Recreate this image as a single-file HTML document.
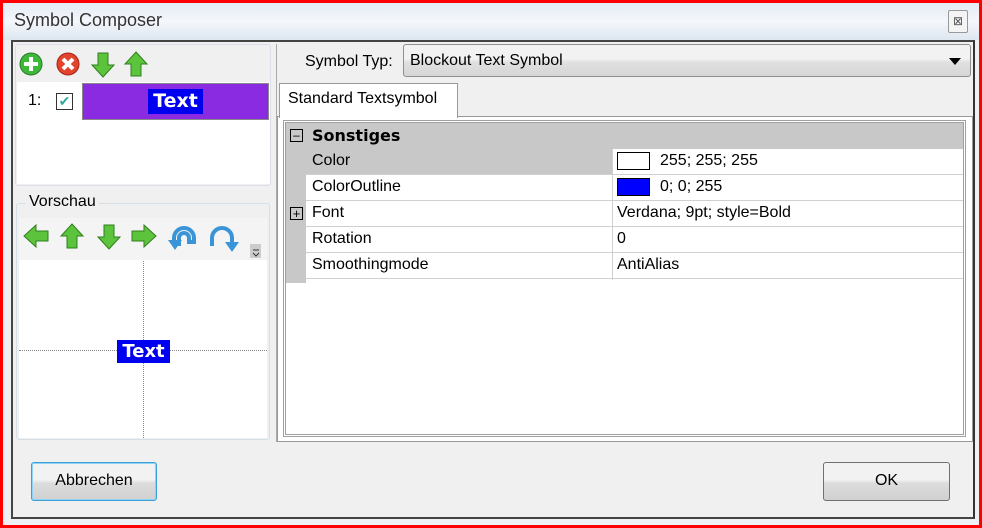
<!DOCTYPE html>
<html><head><meta charset="utf-8"><style>
*{box-sizing:border-box;margin:0;padding:0}
body{width:982px;height:528px;overflow:hidden;background:#fff;font-family:"Liberation Sans",sans-serif;font-size:16px;color:#000;position:relative}
.a{position:absolute}
.red{left:0;top:0;width:982px;height:528px;border:3px solid #f00;background:#eef0f3}
.title{left:3px;top:3px;width:976px;height:37px;background:linear-gradient(#e4ebf4,#f4f7fb 50%,#dde6f0)}
.frame{left:11px;top:40px;width:964px;height:479px;border:2px solid #444;border-right-color:#333;background:#f0f0f0}
.row{position:absolute;left:0;height:26px;width:100%;border-bottom:1px solid #d0d0d0;background:#fff}
.row span{position:absolute;top:3px}
.btn{border:1px solid #707070;border-radius:3px;background:linear-gradient(#f2f2f2 45%,#dcdcdc 55%,#d0d0d0);text-align:center;line-height:36px}
</style></head><body>
<div class="a red"></div>
<div class="a title"></div>
<div class="a" style="left:14px;top:10px;font-size:18px;color:#333">Symbol Composer</div>
<div class="a" style="left:948px;top:10px;width:20px;height:23px;border:1px solid #999;border-radius:2px;background:#f4f4f4;font-size:12px;text-align:center;line-height:21px;color:#555">&#x22A0;</div>
<div class="a frame"></div>

<!-- left list panel -->
<div class="a" style="left:15px;top:44px;width:256px;height:142px;border:1px solid #dde;background:#f0f0f0;border-radius:3px"></div>
<svg class="a" style="left:18px;top:50px" width="140" height="28">
<circle cx="13" cy="14" r="11" fill="#3db83a" stroke="#2a7c25"/><path d="M13 7v14M6 14h14" stroke="#fff" stroke-width="4"/>
<circle cx="50" cy="14" r="11" fill="#e2452c" stroke="#a42315"/><path d="M45 9l10 10M55 9l-10 10" stroke="#fff" stroke-width="4"/>
<path d="M80 3h10v12h6l-11 12l-11-12h6z" fill="#5cc43c" stroke="#2f7e1c"/>
<path d="M118 2l11 12h-6v12h-10v-12h-6z" fill="#5cc43c" stroke="#2f7e1c"/>
</svg>
<div class="a" style="left:17px;top:82px;width:253px;height:102px;background:#fff"></div>
<div class="a" style="left:28px;top:92px">1:</div>
<div class="a" style="left:56px;top:93px;width:17px;height:17px;border:1px solid #333;background:#fff;color:#3a9;font-size:14px;line-height:15px;text-align:center">&#10004;</div>
<div class="a" style="left:82px;top:83px;width:187px;height:37px;background:#8a2be2;border:1px solid #888"></div>
<div class="a" style="left:148px;top:89px;width:55px;height:25px;background:#0000f0;color:#fff;font-weight:bold;font-size:19px;line-height:25px;text-align:center;font-family:'DejaVu Sans',sans-serif">Text</div>

<!-- Vorschau -->
<div class="a" style="left:16px;top:203px;width:254px;height:237px;border:1px solid #d5dfe5;border-radius:3px"></div>
<div class="a" style="left:26px;top:193px;background:#f0f0f0;padding:0 3px;font-size:16px">Vorschau</div>
<div class="a" style="left:19px;top:218px;width:248px;height:42px;background:#f4f4f4"></div>
<svg class="a" style="left:22px;top:222px" width="240" height="36">
<path d="M2 14l12-11v6h12v10h-12v6z" fill="#5cc43c" stroke="#2f7e1c"/>
<path d="M50 2l11 12h-6v12h-10v-12h-6z" fill="#5cc43c" stroke="#2f7e1c"/>
<path d="M82 3h10v12h6l-11 12l-11-12h6z" fill="#5cc43c" stroke="#2f7e1c"/>
<path d="M134 14l-12-11v6h-12v10h12v6z" fill="#5cc43c" stroke="#2f7e1c"/>
<path d="M152 24v-8a10 10 0 0 1 20 0v4h-5v-4a5 5 0 0 0-10 0v8" fill="none" stroke="#3a95d8" stroke-width="4"/>
<path d="M146 18h14l-7 10z" fill="#3a95d8"/>
<path d="M190 24v-8a10 10 0 0 1 20 0v8" fill="none" stroke="#3a95d8" stroke-width="4"/>
<path d="M203 20h14l-7 10z" fill="#3a95d8"/>
<rect x="228" y="22" width="11" height="14" fill="#ccc"/><path d="M231 28h6M231 31l3 3l3-3" stroke="#333" fill="none"/>
</svg>
<div class="a" style="left:19px;top:260px;width:248px;height:178px;background:#fff"></div>
<div class="a" style="left:143px;top:261px;height:177px;border-left:1px dotted #888"></div>
<div class="a" style="left:19px;top:350px;width:248px;border-top:1px dotted #888"></div>
<div class="a" style="left:117px;top:340px;width:53px;height:23px;background:#0000f0;color:#fff;font-weight:bold;font-size:18px;line-height:23px;text-align:center;font-family:'DejaVu Sans',sans-serif">Text</div>

<!-- right -->
<div class="a" style="left:276px;top:44px;width:1px;height:398px;background:#aaa"></div>
<div class="a" style="left:305px;top:53px">Symbol Typ:</div>
<div class="a" style="left:403px;top:44px;width:568px;height:33px;border:1px solid #8e8f8f;border-radius:3px;background:linear-gradient(#f2f2f2 45%,#e0e0e0 55%,#d6d6d6)"></div>
<div class="a" style="left:410px;top:52px">Blockout Text Symbol</div>
<div class="a" style="left:949px;top:58px;border:6px solid transparent;border-top:7px solid #000;border-bottom:0"></div>
<div class="a" style="left:277px;top:116px;width:696px;height:326px;border:1px solid #999;background:#fff"></div>
<div class="a" style="left:279px;top:83px;width:179px;height:35px;border:1px solid #999;border-bottom:none;background:#fff;padding:6px 0 0 8px">Standard Textsymbol</div>
<div class="a" style="left:283px;top:120px;width:683px;height:317px;border:3px double #a0a0a0;background:#fff;overflow:hidden">
 <div class="a" style="left:0;top:0;width:100%;height:26px;background:#c8c8c8"></div>
 <div class="a" style="left:0;top:0;width:20px;height:160px;background:#c8c8c8"></div>
 <div class="a" style="left:4px;top:6px;width:13px;height:13px;border:1px solid #000;font-size:12px;line-height:10px;text-align:center">&#8211;</div>
 <div class="a" style="left:26px;top:3px;font-weight:bold;font-family:'DejaVu Sans',sans-serif;font-size:16px">Sonstiges</div>
 <div class="row" style="top:26px;left:20px;width:659px;background:#c8c8c8"><span style="left:6px">Color</span></div>
 <div class="row" style="top:52px;left:20px;width:659px"><span style="left:6px">ColorOutline</span></div>
 <div class="row" style="top:78px;left:20px;width:659px"><span style="left:6px">Font</span></div>
 <div class="row" style="top:104px;left:20px;width:659px"><span style="left:6px">Rotation</span></div>
 <div class="row" style="top:130px;left:20px;width:659px"><span style="left:6px">Smoothingmode</span></div>
 <div class="a" style="left:4px;top:84px;width:13px;height:13px;border:1px solid #000;font-size:13px;line-height:11px;text-align:center">+</div>
 <div class="a" style="left:326px;top:26px;width:353px;height:131px;border-left:1px solid #d0d0d0"></div>
 <div class="a" style="left:327px;top:26px;width:352px;height:25px;background:#fff"></div>
 <div class="a" style="left:331px;top:29px;width:33px;height:18px;border:1px solid #000;background:#fff"></div>
 <div class="a" style="left:374px;top:29px">255; 255; 255</div>
 <div class="a" style="left:331px;top:55px;width:33px;height:18px;border:1px solid #000;background:#00f"></div>
 <div class="a" style="left:374px;top:55px">0; 0; 255</div>
 <div class="a" style="left:331px;top:81px">Verdana; 9pt; style=Bold</div>
 <div class="a" style="left:331px;top:107px">0</div>
 <div class="a" style="left:331px;top:133px">AntiAlias</div>
</div>

<div class="a btn" style="left:31px;top:462px;width:126px;height:39px;border-color:#3c9fd8;box-shadow:inset 0 0 0 1px #8fd3f5">Abbrechen</div>
<div class="a btn" style="left:823px;top:462px;width:127px;height:39px">OK</div>
</body></html>
